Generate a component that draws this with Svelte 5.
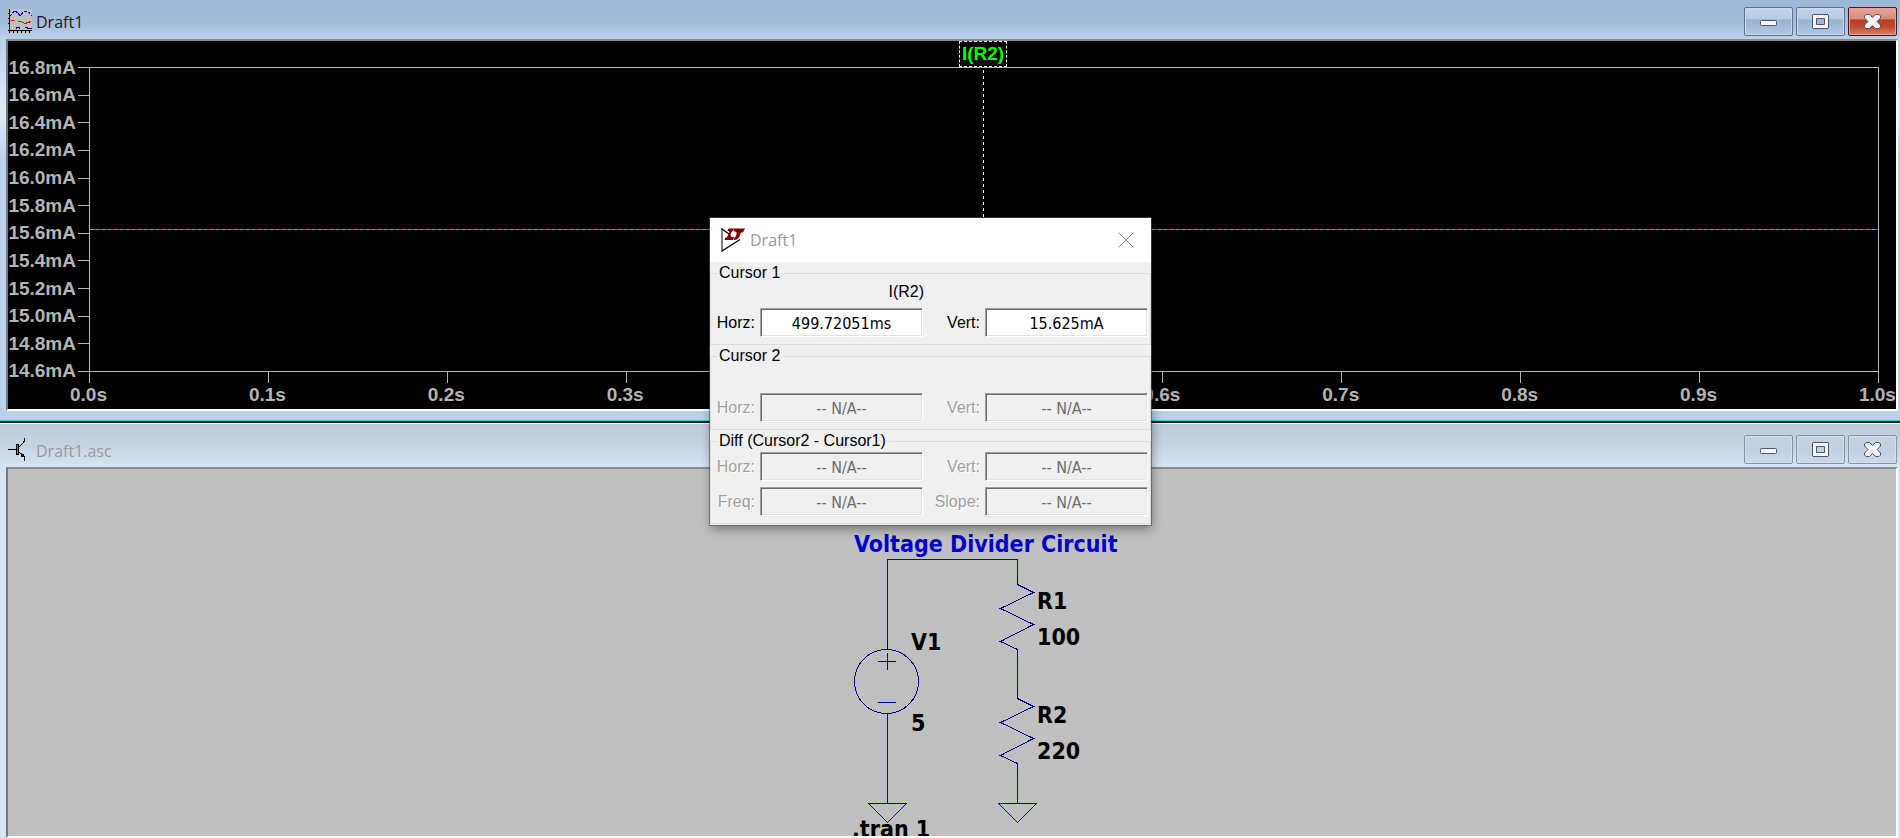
<script>
  const currents = ['16.8mA', '16.6mA', '16.4mA', '16.2mA', '16.0mA', '15.8mA', '15.6mA', '15.4mA', '15.2mA', '15.0mA', '14.8mA', '14.6mA'];
  const times = ['0.0s', '0.1s', '0.2s', '0.3s', '0.4s', '0.5s', '0.6s', '0.7s', '0.8s', '0.9s', '1.0s'];
  const groups = [
    {
      title: 'Cursor 1',
      trace: 'I(R2)',
      fields: [
        { id: 'c1-horz', label: 'Horz:', value: '499.72051ms' },
        { id: 'c1-vert', label: 'Vert:', value: '15.625mA' }
      ]
    },
    {
      title: 'Cursor 2',
      trace: '',
      fields: [
        { id: 'c2-horz', label: 'Horz:', value: '-- N/A--', disabled: true },
        { id: 'c2-vert', label: 'Vert:', value: '-- N/A--', disabled: true }
      ]
    },
    {
      title: 'Diff (Cursor2 - Cursor1)',
      compact: true,
      fields: [
        { id: 'd-horz', label: 'Horz:', value: '-- N/A--', disabled: true },
        { id: 'd-vert', label: 'Vert:', value: '-- N/A--', disabled: true },
        { id: 'd-freq', label: 'Freq:', value: '-- N/A--', disabled: true },
        { id: 'd-slope', label: 'Slope:', value: '-- N/A--', disabled: true }
      ]
    }
  ];
</script>

{#snippet controls(active)}
  <div class="controls">
    <button class="ctl" aria-label="Minimize">
      <svg width="17" height="15" viewBox="0 0 17 15"><rect x="0.5" y="6.5" width="16" height="5" rx="1" fill="#f6f6f6" stroke="#4f5468" /></svg>
    </button>
    <button class="ctl" aria-label="Maximize">
      <svg width="17" height="15" viewBox="0 0 17 15"><path d="M1 .5H16L16.500 1V14L16 14.500H1L.5 14V1Z M4.500 4.500V10.500H12.500V4.500Z" fill="#f3f3f3" fill-rule="evenodd" stroke="#4f5468" /></svg>
    </button>
    <button class="ctl" class:close={active} aria-label="Close">
      <svg width="17" height="15" viewBox="0 0 17 15"><path d="M2 .5H5.500L8.500 3.500L11.500 .5H15L16.500 2V4L13 7.500L16.500 11V13L15 14.500H11.500L8.500 11.500L5.500 14.500H2L.5 13V11L4 7.500L.5 4V2Z" fill="#f3f3f3" stroke="#4f5468" /></svg>
    </button>
  </div>
{/snippet}

<main class="workspace">
  <section class="window plot-window">
    <header class="titlebar">
      <svg class="icon" width="24" height="24" viewBox="0 0 24 24" shape-rendering="crispEdges">
        <rect width="24" height="24" fill="#c0c0c0" />
        <path d="M1.500 0V24M0 21.500H24M0 4.500H2M0 9.500H2M0 14.500H2M5.500 22V24M9.500 22V24M13.500 22V24M17.500 22V24M21.500 22V24" stroke="#000" fill="none" />
        <path d="M2 7L7 1.500L12 6.500L15 3.500L18 2L21 3.500L24 7" stroke="#0000e0" fill="none" stroke-dasharray="3 1" />
        <path d="M3 11.500H7M10 12.500H13L17 14.500L23 12.500" stroke="#f00" fill="none" />
        <path d="M8 20V18.500H11V20M17 18.500H19V19.500H24" stroke="#000090" fill="none" />
      </svg>
      <h1>Draft1</h1>
      {@render controls(true)}
    </header>
    <div class="client plot">
      <div class="trace"><span>I(R2)</span></div>
      <ul class="y-axis">
        {#each currents as c}<li><span>{c}</span><i></i></li>{/each}
      </ul>
      <div class="area">
        <div class="current"></div>
        <div class="cursor"></div>
      </div>
      <ul class="x-axis">
        {#each times as t}<li><i></i><span>{t}</span></li>{/each}
      </ul>
    </div>
  </section>

  <section class="window inactive">
    <header class="titlebar">
      <svg class="icon" width="24" height="24" viewBox="0 0 24 24" shape-rendering="crispEdges">
        <path d="M0 12.500H9M11 10L13.500 7.500L16.500 4V1M11 15L16.500 19.500V24" stroke="#000" fill="none" />
        <rect x="8.500" y="7.500" width="2" height="10" fill="#777" stroke="#000" />
        <path d="M12 19L15 16L17 21Z" fill="#000" />
      </svg>
      <h1>Draft1.asc</h1>
      {@render controls(false)}
    </header>
    <div class="client sheet">
      <svg class="schematic" width="340" height="367" viewBox="0 0 340 367">
        <g fill="none" shape-rendering="crispEdges">
          <path d="M105.500 172V90.500H235.500V108M105.500 252V334.500M235.500 188V222M235.500 302V334.500" stroke="#0000e0" />
          <path d="M86.500 334.500H124.500L105.500 353.500ZM216.500 334.500H254.500L235.500 353.500Z" stroke="#0000e0" />
          <g stroke="#000080">
            <path d="M105.500 172V180M105.500 245V252M96 192.500H114M105.500 184V201M96 233.500H114" />
            <circle cx="104.500" cy="212.500" r="32" />
            <path d="M235.500 108V115.500L251.500 123.500L218.500 139.500L251.500 155.500L218.500 172.500L235.500 180.500V188" />
            <path d="M235.500 222V229.500L251.500 237.500L218.500 253.500L251.500 269.500L218.500 286.500L235.500 294.500V302" />
          </g>
        </g>
        <text class="comment" x="72" y="83">Voltage Divider Circuit</text>
        <text x="129" y="181">V1</text>
        <text x="129" y="262">5</text>
        <text x="255" y="140">R1</text>
        <text x="255" y="176">100</text>
        <text x="255" y="254">R2</text>
        <text x="255" y="290">220</text>
        <text x="70" y="368">.tran 1</text>
      </svg>
    </div>
  </section>

  <div class="dialog" role="dialog" aria-labelledby="dialog-title">
    <header>
      <svg width="24" height="24" viewBox="0 0 24 24">
        <path d="M1 0V24" stroke="#808080" stroke-width="2" />
        <path d="M1 1L8 6M1 23L19 11.500" fill="none" stroke="#000" stroke-width="1.300" />
        <path d="M7.500 .5H13L12 2.500Q10 4 9.500 6.500Q9.500 8.500 11 9H13L12 12H3.500L4.500 9.500H6L8.500 3H6.500Z M13 .5H24L22 4.500H20L18.500 8.500Q17 12 12.500 12L13 10.500Q14.500 9.500 15.500 6.500Q16 4 14.500 3.500H12.500Z" fill="#800000" />
      </svg>
      <h2 id="dialog-title">Draft1</h2>
      <button class="dismiss" aria-label="Close cursors">
        <svg width="16" height="16" viewBox="0 0 16 16"><path d="M.5 .5L15.500 15.500M15.500 .5L.5 15.500" stroke="#8c8c8c" /></svg>
      </button>
    </header>
    {#each groups as g}
      <fieldset>
        <legend>{g.title}</legend>
        {#if !g.compact}<p class:empty={!g.trace}>{g.trace}</p>{/if}
        <div class="fields" class:compact={g.compact}>
          {#each g.fields as f}
            <label for={f.id} class:off={f.disabled}>{f.label}</label>
            <input id={f.id} type="text" value={f.value} disabled={f.disabled} />
          {/each}
        </div>
      </fieldset>
    {/each}
  </div>
</main>

<style>
  :global(body) {
    margin: 0;
    background: #bad1e9;
  }
  * {
    box-sizing: border-box;
  }
  .workspace {
    position: relative;
    display: flex;
    flex-direction: column;
    min-height: 100vh;
    overflow: hidden;
    font-family: 'Liberation Sans', Arial, sans-serif;
  }
  .window {
    display: flex;
    flex-direction: column;
    padding: 0 2px 0 6px;
    background: #bad1e9;
  }
  .plot-window {
    padding-bottom: 9px;
    background: linear-gradient(#9db7d6, #bad1ea 40px, #dce8f5 100px, #dce8f5 120px, #bad1e9 160px);
  }
  .inactive {
    flex: 1;
    padding-bottom: 1px;
    border-top: 1px solid #22d3ee;
    background: #d7e4f2;
    box-shadow: inset 0 2px #111, inset 0 3px #f4f7fa;
  }
  .titlebar {
    display: flex;
    align-items: center;
    height: 39px;
    margin: 0 -2px 0 -6px;
    padding: 0 3px 0 8px;
    background: linear-gradient(#9db7d6, #a3bddb 60%, #bad2eb);
  }
  .inactive .titlebar {
    height: 43px;
    margin-top: 3px;
    padding-top: 6px;
    background: linear-gradient(#becbda, #c6d3e1 50%, #d7e5f3);
  }
  .inactive .icon {
    margin-bottom: 2px;
  }
  .titlebar .icon {
    margin-top: 2px;
  }
  h1,
  h2 {
    margin: 0;
    font: 400 16px/22px 'Open Sans', 'Noto Sans', sans-serif;
  }
  h1 {
    flex: 1;
    margin: 5px 0 0 4px;
    color: #1b1b1b;
  }
  .inactive h1 {
    color: #999;
  }
  .controls {
    display: flex;
    gap: 3px;
    margin-top: 4px;
  }
  .inactive .controls {
    margin-top: 2px;
  }
  .ctl {
    display: grid;
    place-items: center;
    width: 49px;
    height: 29px;
    padding: 0;
    border: 1px solid #5c7190;
    border-radius: 2px;
    background: linear-gradient(#c3d5ea, #b5cbe3 42%, #98b2cf 43%, #b0cae4);
    box-shadow: inset 0 0 0 1px #c8dbf0;
  }
  .ctl.close {
    border-color: #4c1420;
    background: linear-gradient(#e8a698, #d98a7a 42%, #b83c25 43%, #c04a30 70%, #d98370);
    box-shadow: inset 0 0 0 1px #e6a292;
  }
  .inactive .ctl {
    border-color: #8292ae;
    background: linear-gradient(#c5d2e2, #c2cfdf 50%, #cad9ea);
    box-shadow: inset 0 0 0 1px #d3dfed;
  }
  .client {
    border: 2px solid;
    border-color: #8b8b8b #fff #fff #777;
    overflow: hidden;
  }
  .plot {
    display: grid;
    grid-template-columns: 81px 1fr 17px;
    grid-template-rows: 26px 305px 37px;
    background: #000;
    color: #b4b4b4;
    font-size: 19px;
    font-weight: 700;
    line-height: 20px;
  }
  .plot ul {
    display: flex;
    justify-content: space-between;
    margin: 0;
    padding: 0;
    list-style: none;
  }
  .trace {
    grid-column: 2;
    justify-self: center;
    margin-right: 2px;
    padding: 0 2px;
    border: 1px dashed #fff;
    background: linear-gradient(#000 60%, #111);
    color: #0f0;
    line-height: 24px;
  }
  .y-axis {
    grid-area: 2 / 1;
    flex-direction: column;
  }
  .y-axis li {
    display: flex;
    align-items: center;
    justify-content: flex-end;
    gap: 2px;
    height: 1px;
  }
  .y-axis i {
    width: 11px;
    height: 1px;
    background: #b4b4b4;
  }
  .area {
    grid-area: 2 / 2;
    position: relative;
    border: 1px solid #b4b4b4;
  }
  .current {
    height: 1px;
    margin-top: 161px;
    background: repeating-linear-gradient(90deg, #0f0 0 3px, #f0f 3px 6px);
  }
  .cursor {
    position: absolute;
    inset: 2px auto 0 calc(50% - 1px);
    width: 1px;
    background: repeating-linear-gradient(#fff 0 3px, #000 3px 6px);
  }
  .x-axis {
    grid-area: 3 / 2;
  }
  .x-axis li {
    display: flex;
    flex-direction: column;
    align-items: center;
    width: 1px;
  }
  .x-axis i {
    width: 1px;
    height: 11px;
    margin-bottom: 2px;
    background: #b4b4b4;
  }
  .x-axis span {
    margin-right: 2px;
  }
  .sheet {
    flex: 1;
    display: flex;
    justify-content: center;
    background: #c0c0c0;
  }
  .schematic text {
    font: 700 23px 'DejaVu Sans Condensed', 'DejaVu Sans', sans-serif;
  }
  .schematic .comment {
    fill: #0000c8;
  }
  .dialog {
    position: absolute;
    top: 218px;
    left: calc(50% - 240px);
    width: 441px;
    padding-bottom: 1px;
    background: #f0f0f0;
    box-shadow: 0 0 0 1px rgba(80, 80, 80, 0.6), 1px 4px 10px rgba(0, 0, 0, 0.4);
    font-size: 16px;
    line-height: 20px;
  }
  .dialog header {
    display: flex;
    align-items: center;
    height: 44px;
    padding: 0 17px 0 11px;
    background: #fff;
  }
  h2 {
    flex: 1;
    margin-left: 5px;
    color: #999;
  }
  .dismiss {
    display: grid;
    padding: 0;
    border: 0;
    background: none;
  }
  fieldset {
    min-width: 0;
    margin: 1px 0 0;
    padding: 0 0 7px;
    border: 1px solid #dcdcdc;
  }
  legend {
    margin-left: 6px;
    padding: 0 3px 0 2px;
  }
  fieldset p {
    width: 213px;
    height: 25px;
    margin: 0;
    line-height: 18px;
    text-align: right;
  }
  fieldset p.empty {
    height: 27px;
  }
  .fields {
    display: grid;
    grid-template-columns: 44px 163px 52px 163px;
    gap: 6px 5px;
    align-items: center;
  }
  .compact {
    padding-top: 1px;
  }
  label {
    text-align: right;
  }
  label.off {
    color: #a0a0a0;
    text-shadow: 1px 1px #fff;
  }
  input {
    width: 100%;
    height: 29px;
    padding: 2px 0 0;
    border: 1px solid;
    border-color: #a0a0a0 #fff #fff #a0a0a0;
    border-radius: 0;
    background: #fff;
    box-shadow: inset 1px 1px #696969, inset -1px -1px #e3e3e3;
    color: #000;
    font: 16px 'DejaVu Sans Condensed', 'DejaVu Sans', sans-serif;
    text-align: center;
  }
  input:disabled {
    background: #f0f0f0;
    color: #6d6d6d;
  }
</style>
